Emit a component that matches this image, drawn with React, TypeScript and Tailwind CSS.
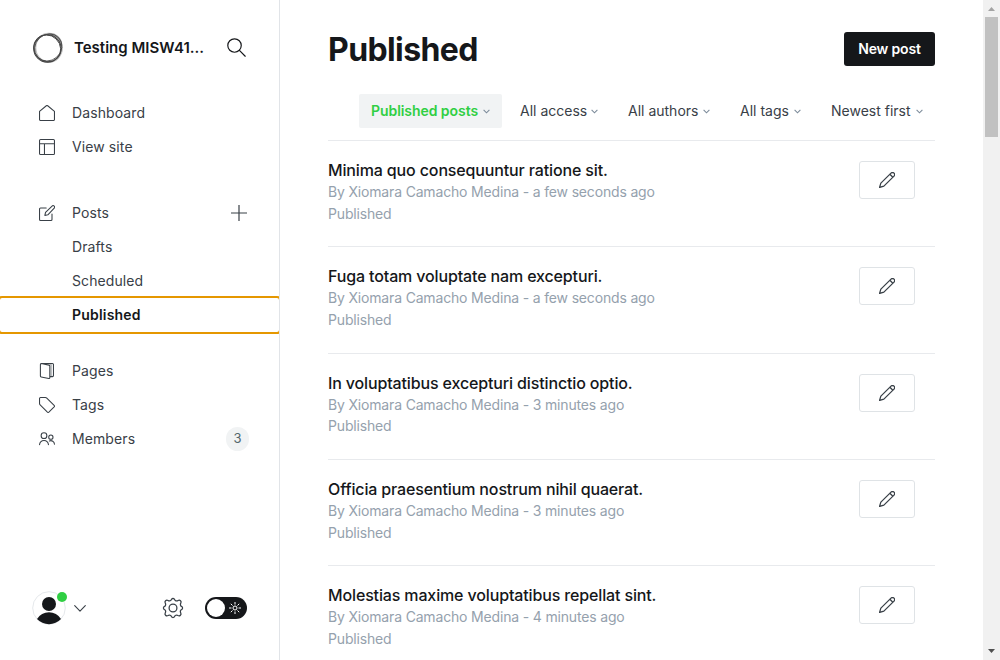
import type { ReactNode } from "react";

function Icon({ size = 16, sw = 1.5, className = "", children }: { size?: number; sw?: number; className?: string; children: ReactNode }) {
  return (
    <svg width={size} height={size} viewBox="0 0 24 24" fill="none" stroke="currentColor" strokeWidth={sw} strokeLinecap="round" strokeLinejoin="round" className={`shrink-0 ${className}`}>
      {children}
    </svg>
  );
}

const icons = {
  home: <path d="M.8 9.500v12a1.600 1.600 0 0 0 1.600 1.700h19.200a1.600 1.600 0 0 0 1.600-1.700v-12L13 1.100a1.700 1.700 0 0 0-2 0z" />,
  layout: (
    <>
      <rect x=".8" y=".8" width="22.4" height="22.4" rx="1.6" />
      <path d="M.8 7.200h22.400M8.200 7.200v16" />
    </>
  ),
  posts: (
    <>
      <path d="M19.500 13.500v8.200a1.500 1.500 0 0 1-1.500 1.500H2.300a1.500 1.500 0 0 1-1.500-1.500V6a1.500 1.500 0 0 1 1.500-1.500h8.500" />
      <path d="m13.300 14.700-4.500 1 1-4.500 9.800-9.600a2.200 2.200 0 0 1 3.100 0l.1.1a2.200 2.200 0 0 1 0 3.100z" />
    </>
  ),
  pages: (
    <>
      <path d="M3.500.8 15 3.200a1.500 1.500 0 0 1 1.200 1.500v17.300a1.200 1.200 0 0 1-1.500 1.200L3.300 21a1.500 1.500 0 0 1-1.200-1.500V2.200A1.400 1.400 0 0 1 3.500.8h16.700a1.500 1.500 0 0 1 1.500 1.500v16.600a1.500 1.500 0 0 1-1.500 1.500h-4" />
      <path d="M13.500.8l3.500.6a1.500 1.500 0 0 1 1.200 1.400v17" strokeOpacity=".5" />
    </>
  ),
  tag: <path d="M.8 2.300v7.300a3 3 0 0 0 .9 2.100l10.900 11a1.600 1.600 0 0 0 2.200 0l7.900-7.900a1.600 1.600 0 0 0 0-2.200L11.700 1.700a3 3 0 0 0-2.100-.9H2.300A1.500 1.500 0 0 0 .8 2.300z" />,
  members: (
    <>
      <circle cx="7.500" cy="7" r="4.300" />
      <path d="M.8 20.500a6.800 7.600 0 0 1 13.400 0" />
      <circle cx="17.800" cy="9.200" r="3.200" />
      <path d="M15.600 15a5.400 5.400 0 0 1 7.600 4.800" />
    </>
  ),
};

function NavItem({ icon, label, children }: { icon?: ReactNode; label: string; children?: ReactNode }) {
  return (
    <div className="flex h-[34px] items-center pl-[39px] pr-[31px] text-[14px] tracking-[0.1px] text-[#394047]">
      <div className="w-[33px]">{icon && <Icon sw={1.6}>{icon}</Icon>}</div>
      <span className="flex-1 pb-[2px]">{label}</span>
      {children}
    </div>
  );
}

function Filter({ label, active, className = "" }: { label: string; active?: boolean; className?: string }) {
  return (
    <div className={`flex h-[34px] shrink-0 items-center justify-between rounded-[2px] px-3 text-[14px] whitespace-nowrap ${active ? "bg-[#f1f3f4] font-semibold tracking-[-0.06px] text-[#30cf43]" : "tracking-[0px] text-[#394047]"} ${className}`}>
      <span className="pb-[2px]">{label}</span>
      <svg width="7" height="5" viewBox="0 0 7 5" fill="none" stroke="#7c8b9a" strokeWidth="1.100" className="shrink-0">
        <path d="m.6.9 2.900 2.900L6.400.9" />
      </svg>
    </div>
  );
}

const posts = [
  { title: "Minima quo consequuntur ratione sit.", time: "a few seconds ago" },
  { title: "Fuga totam voluptate nam excepturi.", time: "a few seconds ago" },
  { title: "In voluptatibus excepturi distinctio optio.", time: "3 minutes ago" },
  { title: "Officia praesentium nostrum nihil quaerat.", time: "3 minutes ago" },
  { title: "Molestias maxime voluptatibus repellat sint.", time: "4 minutes ago" },
];

function Sidebar() {
  return (
    <aside className="flex h-full w-[280px] shrink-0 flex-col border-r border-[#e1e4e8]">
      <div className="flex h-24 items-center pl-8 pr-[33px]">
        <svg width="32" height="32" viewBox="0 0 32 32" fill="none" stroke="#444" className="shrink-0">
          <circle cx="15.400" cy="16.500" r="13.700" strokeWidth="1.100" />
          <ellipse cx="16.200" cy="15.500" rx="14.300" ry="12.900" strokeWidth=".8" transform="rotate(-42 16.200 15.500)" />
          <ellipse cx="16.800" cy="15.800" rx="13.300" ry="14.200" strokeWidth="1.600" opacity=".35" />
          <ellipse cx="15.200" cy="16.300" rx="14" ry="12.900" strokeWidth=".9" transform="rotate(44 15.200 16.300)" />
          <path d="M15 3c8-3 14.500 3.500 14 11" strokeWidth="2.400" opacity=".35" />
        </svg>
        <span className="ml-[10px] flex-1 text-[15px] font-semibold whitespace-nowrap text-[#15171a]">Testing MISW41...</span>
        <Icon size={19} sw={1.5} className="mb-px text-[#15171a]">
          <circle cx="9.500" cy="9.500" r="8.500" />
          <path d="m15.700 15.700 7.300 7.300" />
        </Icon>
      </div>
      <nav className="overflow-x-clip">
        <NavItem icon={icons.home} label="Dashboard" />
        <NavItem icon={icons.layout} label="View site" />
        <div className="mt-8">
          <NavItem icon={icons.posts} label="Posts">
            <svg width="18" height="18" viewBox="0 0 18 18" stroke="#394047" strokeWidth="1.200" fill="none">
              <path d="M9 1v16M1 9h16" />
            </svg>
          </NavItem>
          <NavItem label="Drafts" />
          <NavItem label="Scheduled" />
          <div className="flex h-[34px] items-center rounded-[2px] pb-[2px] pl-[72px] text-[14px] font-semibold tracking-[0.2px] text-[#15171a] outline-2 outline-[#e59700]">
            Published
          </div>
        </div>
        <div className="mt-[22px]">
          <NavItem icon={icons.pages} label="Pages" />
          <NavItem icon={icons.tag} label="Tags" />
          <NavItem icon={icons.members} label="Members">
            <span className="-mr-px flex h-6 w-[23px] items-center justify-center rounded-full bg-[#f1f3f4] text-[13px] tracking-normal text-[#54666d]">3</span>
          </NavItem>
        </div>
      </nav>
      <div className="mt-auto mb-[34px] flex h-9 items-center pl-8 pr-8">
        <svg width="36" height="36" viewBox="0 0 36 36" className="shrink-0">
          <circle cx="17" cy="18" r="16.300" fill="#fff" stroke="#e5e8eb" />
          <circle cx="17" cy="14" r="7" fill="#15171a" />
          <path d="M5 29a14 14 0 0 1 24 0 16.500 16.500 0 0 1-24 0z" fill="#15171a" />
          <circle cx="30" cy="7" r="5" fill="#30cf43" />
        </svg>
        <svg width="12" height="7" viewBox="0 0 12 7" fill="none" stroke="#394047" strokeWidth="1.100" strokeLinecap="round" strokeLinejoin="round" className="ml-[6px]">
          <path d="m.7.7 5.300 5.500L11.300.7" />
        </svg>
        <svg width="20" height="20" viewBox="1 1 22 22" fill="none" stroke="#394047" strokeWidth="1.400" strokeLinejoin="round" className="ml-auto overflow-visible">
          <circle cx="12" cy="12" r="4.300" />
          <path d="M13.550 2.210a2.500 2.500 0 0 0 4 1.500 2.170 2.170 0 0 1 3 3 2.500 2.500 0 0 0 1.300 3.750 2.170 2.170 0 0 1 0 3.080 2.500 2.500 0 0 0-1.400 3.750 2.170 2.170 0 0 1-3 3 2.500 2.500 0 0 0-3.900 1.500 2.170 2.170 0 0 1-3.100 0 2.500 2.500 0 0 0-3.900-1.500 2.170 2.170 0 0 1-3-3 2.500 2.500 0 0 0-1.400-3.750 2.170 2.170 0 0 1 0-3.080 2.500 2.500 0 0 0 1.400-3.750 2.170 2.170 0 0 1 3-3 2.500 2.500 0 0 0 3.900-1.500 2.170 2.170 0 0 1 3.100 0z" />
        </svg>
        <div className="ml-[22px] flex h-[22px] w-[42px] items-center justify-between rounded-full bg-[#15171a] pl-[2px] pr-[6px]">
          <div className="size-[18px] rounded-full bg-white" />
          <svg width="12" height="12" viewBox="0 0 12 12" fill="none" stroke="#fff" strokeWidth="1">
            <circle cx="6" cy="6" r="2" />
            <path d="M6 0v2.500M6 9.500V12M0 6h2.500M9.500 6H12M1.800 1.800l1.700 1.700M8.500 8.500l1.700 1.700M10.200 1.800 8.500 3.500M3.500 8.500l-1.700 1.700" />
          </svg>
        </div>
      </div>
    </aside>
  );
}

export default function App() {
  return (
    <div className="flex h-[660px] w-[1000px] overflow-hidden bg-white font-['Inter',sans-serif]">
      <Sidebar />
      <main className="min-w-0 flex-1 overflow-hidden pl-12 pr-12">
        <header className="flex h-[94px] items-start justify-between pt-8">
          <h1 className="text-[32px] leading-9 font-bold tracking-[-0.6px] text-[#15171a]">Published</h1>
          <button className="h-[34px] w-[91px] rounded-[3px] bg-[#15171a] pb-[2px] text-[14px] font-semibold tracking-[-0.15px] text-white">New post</button>
        </header>
        <div className="flex justify-end">
          <Filter label="Published posts" active className="mr-[6px] w-[143px]" />
          <Filter label="All access" className="mr-[6px] w-[102px]" />
          <Filter label="All authors" className="mr-[6px] w-[106px]" />
          <Filter label="All tags" className="mr-[6px] w-[85px]" />
          <Filter label="Newest first" className="w-[116px]" />
        </div>
        <div className="mt-3">
          {posts.map((p) => (
            <article key={p.title} className="flex h-[106.3px] justify-between border-t border-[#e8eaed] pt-5 pr-5">
              <div className="-mt-px">
                <h3 className="text-[16px] leading-[20px] font-medium tracking-[-0.14px] text-[#15171a]">{p.title}</h3>
                <p className="mt-px text-[14px] leading-[21.7px] tracking-[-0.17px] text-[#95a1ad]">
                  By Xiomara Camacho Medina - {p.time}
                  <br />
                  Published
                </p>
              </div>
              <button className="flex h-[38px] w-14 items-center justify-center rounded-[3px] border border-[#dfe3e6] text-[#394047]">
                <Icon sw={1.9}>
                  <path d="M7.300 21.200.8 23.200l2-6.500L18 1.700a3.180 3.180 0 0 1 4.500 4.500zM16.300 3.300l4.500 4.500" />
                </Icon>
              </button>
            </article>
          ))}
        </div>
      </main>
      <div className="flex w-[17px] shrink-0 flex-col items-center bg-[#f1f1f1]">
        <svg width="17" height="17" viewBox="0 0 17 17" className="shrink-0">
          <path d="M5 11h7L8.500 7z" fill="#a3a3a3" />
        </svg>
        <div className="h-[120px] w-[13px] bg-[#c1c1c1]" />
        <svg width="17" height="17" viewBox="0 0 17 17" className="mt-auto shrink-0">
          <path d="M5 6h7l-3.500 4z" fill="#505050" />
        </svg>
      </div>
    </div>
  );
}
